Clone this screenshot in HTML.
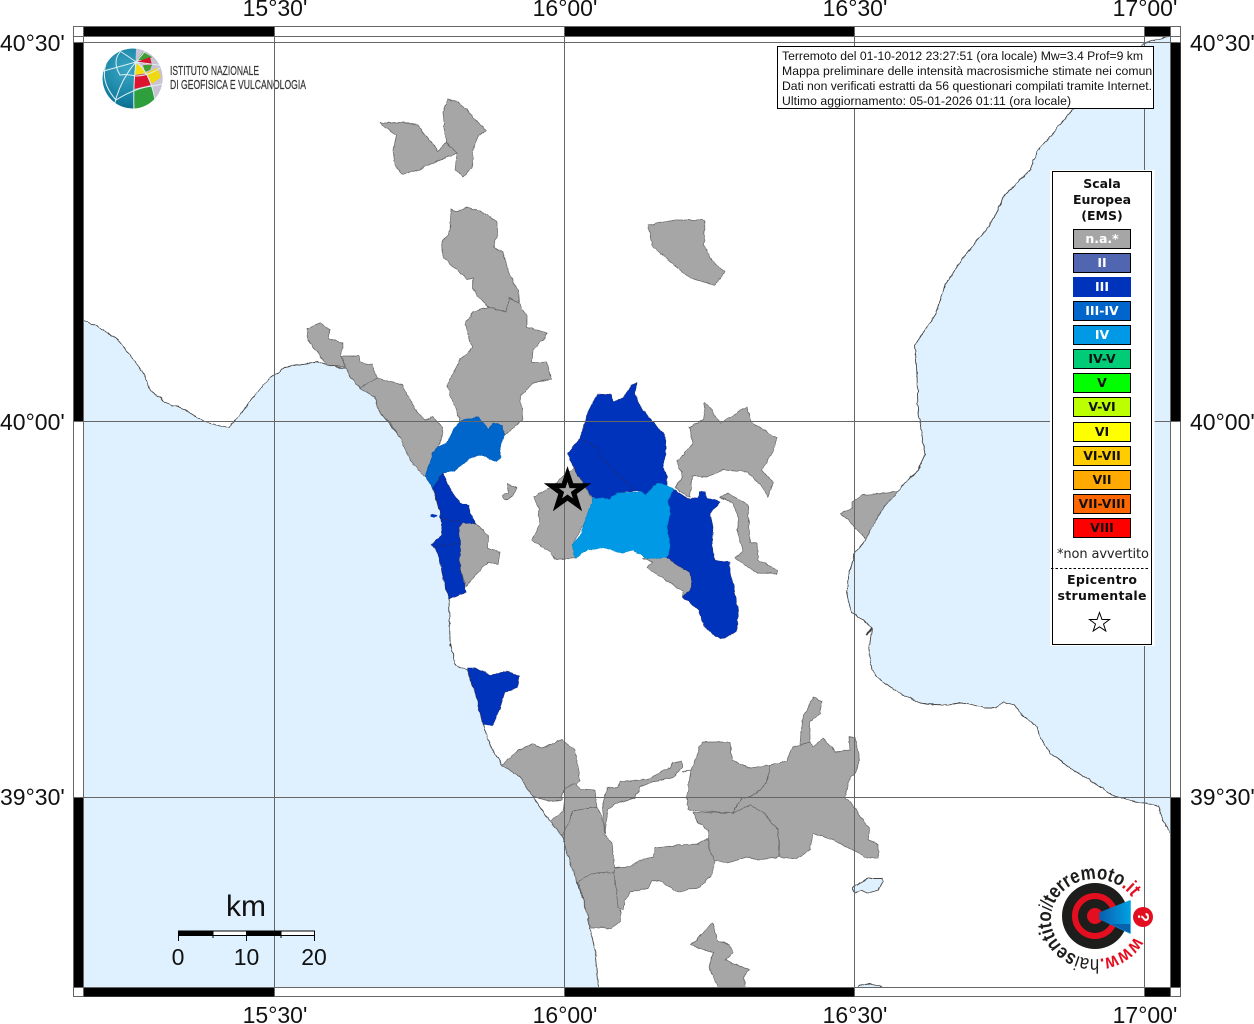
<!DOCTYPE html>
<html lang="it"><head><meta charset="utf-8"><title>Mappa intensità</title>
<style>html,body{margin:0;padding:0;background:#fff;width:1254px;height:1024px;overflow:hidden}svg{display:block}</style></head>
<body>
<svg xmlns="http://www.w3.org/2000/svg" width="1254" height="1024" viewBox="0 0 1254 1024" font-family="'Liberation Sans',sans-serif">
<defs>
<clipPath id="map"><rect x="84" y="37" width="1086" height="950"/></clipPath>
<clipPath id="glob"><circle cx="132.5" cy="78.5" r="30"/></clipPath>
<clipPath id="infoclip"><rect x="778" y="47" width="375" height="61"/></clipPath>
<filter id="rough" filterUnits="userSpaceOnUse" x="70" y="26" width="1115" height="975" color-interpolation-filters="sRGB"><feTurbulence type="fractalNoise" baseFrequency=".16" numOctaves="2" seed="4" result="n"/><feDisplacementMap in="SourceGraphic" in2="n" scale="3" xChannelSelector="R" yChannelSelector="G"/></filter>
<radialGradient id="gb" cx="40%" cy="35%" r="75%"><stop offset="0" stop-color="#3aa6c4"/><stop offset=".7" stop-color="#137d9f"/><stop offset="1" stop-color="#0c5f80"/></radialGradient>
<linearGradient id="cone" x1="0" y1="0" x2="1" y2="0"><stop offset="0" stop-color="#0b5fae"/><stop offset="1" stop-color="#00a0e3"/></linearGradient>
<path id="arc" d="M1134.5 936.5 A44 40 0 1 1 1133 899"/>
</defs>
<rect width="1254" height="1024" fill="#fff"/>
<g clip-path="url(#map)">
<g filter="url(#rough)">
<!-- seas -->
<g fill="#dff1ff" stroke="#444" stroke-width=".9" stroke-linejoin="round">
<polygon points="78,318 84,320 100,328 118,340 130,355 145,375 150,390 165,402 185,410 205,422 228,428 240,415 255,395 270,378 285,367 300,365 318,362 327,365 342,368 348,368 350,377 360,388 375,397 378,410 388,422 410,450 425,477 433,488 440,513 442,535 440,560 443,577 449,599 450,640 455,665 467,670 476,695 483,725 490,745 502,765 520,777 533,797 550,821 562,835 565,847 577,882 586,908 590,928 595,950 598,987 598,995 78,995"/>
<polygon points="1178,34 1155,40 1143,44 1120,70 1072,110 1060,125 1038,150 1030,170 1005,195 990,225 965,255 945,285 935,315 915,345 917,375 918,410 925,455 918,470 908,480 898,491 883,508 870,530 866,539 855,553 848,577 847,597 852,613 863,620 872,628 869,650 872,670 878,678 890,687 907,697 923,704 947,705 965,703 985,708 995,708 1003,702 1015,705 1022,715 1037,727 1040,737 1050,753 1060,760 1067,766 1097,785 1112,795 1120,797 1135,802 1145,803 1158,806 1163,820 1172,835 1178,835"/>
<polygon points="853,887 870,878 882,878 883,882 878,890 868,893 862,890 855,893 853,889"/>
<polygon points="853,992 860,985 870,984 882,987 882,992"/>
</g>
<g fill="#333"><ellipse cx="434" cy="516" rx="3.5" ry="1.5" fill="#0033bb"/><circle cx="450" cy="645" r="1"/></g>
<path d="M866 635 L872 628" stroke="#444" stroke-width="1.5" fill="none"/>
<path d="M682 771 L692 770" stroke="#555" stroke-width=".8" fill="none"/>
<!-- gray comuni -->
<g fill="#a6a6a6" stroke="#666" stroke-width=".7" stroke-linejoin="round">
<polygon points="380,123 405,123 418,125 438,151 446,142 457,153 415,171 402,174 395,165 393,150 396,135"/>
<polygon points="448,99 456,101 467,110 475,120 486,130 477,138 473,152 472,168 463,177 455,170 457,153 446,142 443,112"/>
<polygon points="451,209 457,212 468,207 483,212 497,222 497,237 493,247 503,252 510,275 518,290 519,303 509,298 506,312 488,307 473,290 473,278 467,279 443,257 442,242 450,230"/>
<polygon points="509,298 519,303 527,317 527,327 547,333 545,338 533,350 532,363 547,362 551,379 533,383 520,397 523,420 507,433 500,440 460,430 460,418 453,403 447,385 460,360 472,347 465,325 473,312 488,307 506,312"/>
<polygon points="307,328 320,323 330,330 328,338 343,343 341,356 345,367 327,365 318,353 308,340"/>
<polygon points="341,356 359,356 360,362 372,365 377,378 360,388 350,377 346,367"/>
<polygon points="360,388 377,378 402,385 417,412 425,420 433,417 442,427 443,427 442,440 433,452 428,473 425,477 410,460 400,437 390,423 378,410 375,397"/>
<polygon points="463,522 476,524 488,535 488,548 500,552 498,565 488,562 468,583 466,587 460,567 459,528"/>
<polygon points="508,484 517,488 512,497 505,500 503,496 508,492"/>
<polygon points="575,467 577,473 592,498 593,502 583,525 572,545 576,558 565,559 555,559 550,552 532,540 540,525 538,507 533,497 550,488 563,477"/>
<polygon points="705,403 712,410 720,423 747,407 752,423 777,438 772,453 762,470 773,483 768,497 762,487 747,472 723,470 707,477 692,476 690,498 675,488 683,477 677,462 693,443 689,427 703,420"/>
<polygon points="720,497 728,493 748,505 749,523 750,542 757,543 758,560 777,570 777,574 757,573 735,558 743,550 737,530 739,520 733,503"/>
<polygon points="643,558 667,558 690,573 692,587 683,597 683,592 663,578 647,568 652,562"/>
<polygon points="648,225 675,220 705,220 704,245 713,262 725,272 715,285 690,278 670,262 652,245"/>
<polygon points="898,491 887,493 862,495 852,502 852,508 841,513 866,539 870,530 883,508"/>
<polygon points="502,765 518,750 532,744 542,748 562,740 575,750 580,781 563,790 562,800 550,801 533,797 520,777"/>
<polygon points="563,790 575,783 580,789 595,790 597,807 573,811 567,827 562,835 550,821 563,811 565,798"/>
<polygon points="573,811 597,807 602,817 605,835 612,843 615,872 577,882 565,847 562,835 567,827"/>
<polygon points="578,882 590,874 614,872 620,907 621,920 612,928 590,928 586,908"/>
<polygon points="614,868 630,867 640,860 653,857 655,848 680,845 697,844 708,839 710,852 715,860 713,873 700,887 677,892 662,882 652,880 648,889 630,892 625,900 623,910 618,907"/>
<polygon points="602,808 607,788 618,787 620,782 650,779 660,772 670,768 673,763 682,761 682,768 673,777 663,780 652,782 640,787 635,798 617,803 608,810 605,833"/>
<polygon points="702,742 730,742 732,760 750,768 770,765 767,783 753,796 742,798 732,813 688,810 687,797 691,770"/>
<polygon points="693,812 732,813 750,805 763,812 778,830 779,857 758,860 747,857 727,863 715,860 710,852 708,830 697,822"/>
<polygon points="770,765 787,761 792,747 810,742 813,747 823,738 835,752 850,750 849,737 855,737 858,750 860,760 855,773 850,777 845,797 855,808 870,830 868,840 878,844 878,858 867,858 857,852 833,840 813,833 810,850 797,859 780,857 778,830 763,812 750,805 732,813 742,798 753,796 767,783"/>
<polygon points="800,745 802,720 813,698 822,701 820,713 810,723 810,742"/>
<polygon points="713,922 717,940 730,945 733,953 725,960 750,970 743,977 747,992 720,992 709,967 713,953 691,945"/>
</g>
<!-- III-IV -->
<polygon fill="#0066cc" stroke="#0058b0" stroke-width=".6" points="462,420 478,417 482,422 489,430 493,423 502,425 505,435 500,448 501,457 497,462 483,455 472,457 455,470 443,473 433,488 425,477 433,452 437,447 447,443 455,427"/>
<!-- III -->
<g fill="#0033bb" stroke="#1a2c80" stroke-width=".6" stroke-linejoin="round">
<polygon points="443,473 447,483 453,493 460,503 469,505 470,513 476,524 463,522 459,528 460,543 460,567 466,592 449,599 443,577 440,560 435,547 431,545 442,535 440,513 435,493 433,488"/>
<polygon points="593,402 598,394 612,395 613,402 624,397 632,385 637,383 635,393 640,407 653,422 665,435 666,455 663,467 667,477 667,487 657,483 645,495 642,492 635,491 600,457 598,448 580,438 583,430 588,412"/>
<polygon points="580,438 598,448 600,457 635,491 617,493 610,499 593,498 577,473 570,460 568,453"/>
<polygon points="673,489 690,500 698,497 700,491 705,492 707,498 721,502 710,513 713,527 712,540 713,553 715,560 730,562 730,573 733,583 738,610 737,630 725,638 715,637 705,627 698,610 683,597 692,587 690,573 667,558 670,547 667,527 670,513 668,500"/>
<polygon points="467,668 475,668 490,675 507,672 519,676 517,688 505,692 500,708 493,725 483,725 476,695"/>
</g>
<path d="M441 519 L460 521 M435 547 L460 543" stroke="#1a2c80" stroke-width=".7" fill="none"/>
<!-- IV -->
<polygon fill="#0099e6" stroke="#0088cc" stroke-width=".6" points="593,498 610,499 617,493 642,492 645,495 657,483 673,488 668,500 670,513 667,527 670,547 667,558 648,559 633,550 622,553 605,548 587,550 575,558 572,545 582,533 583,525 592,502"/>
</g>
</g>
<!-- frame -->
<rect x="73.5" y="26.5" width="1107" height="970" fill="none" stroke="#666" stroke-width="1"/>
<g fill="#000">
<rect x="84" y="27" width="190" height="9.5"/><rect x="564.5" y="27" width="290" height="9.5"/><rect x="1144.5" y="27" width="25.5" height="9.5"/>
<rect x="84" y="987.5" width="190" height="9"/><rect x="564.5" y="987.5" width="290" height="9"/><rect x="1144.5" y="987.5" width="25.5" height="9"/>
<rect x="74" y="42" width="9.5" height="379"/><rect x="74" y="797" width="9.5" height="190"/>
<rect x="1170.5" y="42" width="10" height="379"/><rect x="1170.5" y="797" width="10" height="190"/>
</g>
<rect x="83.5" y="36.5" width="1087" height="951" fill="none" stroke="#666" stroke-width="1"/>
<path d="M83.5 26V997M1170.5 26V997M73 36.5H1181M73 987.5H1181" stroke="#666" stroke-width="1" fill="none"/>
<!-- INGV logo -->
<g clip-path="url(#glob)">
<circle cx="132.5" cy="78.5" r="30" fill="url(#gb)"/>
<polygon fill="#c9c3d3" points="136,48 166,48 166,110 134,110"/>
<polygon fill="#3f9f35" points="137,60 143,52 152,57 148,60"/>
<polygon fill="#d8142c" points="137,62 150,57 152,65 140,63"/>
<polygon fill="#f6dd10" points="135,63 143,68 145,73 135,75"/>
<polygon fill="#3f9f35" points="143,65 152,65 150,70 145,72"/>
<polygon fill="#eed80f" points="146,73 157,68 161,77 152,84"/>
<polygon fill="#dc1430" points="135,75 146,74 151,85 134,89"/>
<polygon fill="#2f9e3d" points="134,90 151,86 156,100 142,108 133,109"/>
<g fill="none" stroke="#dff1f4" stroke-width="1">
<path d="M136 62 L100 72"/>
<path d="M136 62 Q120 80 114 106"/>
<path d="M136 62 Q133 85 134 110"/>
<path d="M136 62 Q128 56 118 50"/>
<path d="M136 62 Q142 55 146 50"/>
<path d="M136 62 Q150 72 155 100"/>
<path d="M136 62 L165 66"/>
<path d="M120 52 Q112 62 120 75 Q128 74 136 76 Q148 76 160 68"/>
<path d="M106 64 Q100 82 116 100 Q135 88 152 86 L163 84"/>
</g>
</g>
<g font-size="13" fill="#333" stroke="#333" stroke-width=".2">
<text x="170" y="75" textLength="89" lengthAdjust="spacingAndGlyphs">ISTITUTO NAZIONALE</text>
<text x="170" y="89" textLength="136" lengthAdjust="spacingAndGlyphs">DI GEOFISICA E VULCANOLOGIA</text>
</g>
<!-- grid -->
<g stroke="#666" stroke-width="1" fill="none">
<path d="M274.5 26V997M564.5 26V997M854.5 26V997M1144.5 26V997"/>
<path d="M73 42.5H1181M73 421.5H1181M73 797.5H1181"/>
</g>
<!-- star -->
<polygon fill="#a6a6a6" stroke="#000" stroke-width="5" stroke-linejoin="miter" stroke-miterlimit="10" points="567.5,474 571.4,485.6 583.7,485.7 573.8,493 577.5,504.8 567.5,497.6 557.5,504.8 561.2,493 551.3,485.7 563.6,485.6"/>
<!-- scale -->
<g>
<rect x="178.5" y="931" width="136" height="4.5" fill="#fff" stroke="#000" stroke-width="1"/>
<rect x="178" y="930.5" width="35" height="5.5" fill="#000"/><rect x="246" y="930.5" width="35" height="5.5" fill="#000"/>
<path d="M178.5 931V941M246.5 931V941M314.5 931V941M213 931V938M281 931V938" stroke="#000" stroke-width="1" fill="none"/>
<g font-size="23" text-anchor="middle" fill="#111"><text x="178" y="965">0</text><text x="246.5" y="965">10</text><text x="314" y="965">20</text></g>
<text x="246" y="916" font-size="30" text-anchor="middle" fill="#111">km</text>
</g>
<!-- coordinate labels -->
<g font-size="23" fill="#111" text-anchor="middle">
<text x="275" y="16">15°30'</text><text x="565" y="16">16°00'</text><text x="855" y="16">16°30'</text><text x="1145" y="16">17°00'</text>
<text x="275" y="1023">15°30'</text><text x="565" y="1023">16°00'</text><text x="855" y="1023">16°30'</text><text x="1145" y="1023">17°00'</text>
</g>
<g font-size="23" fill="#111">
<text x="0" y="51">40°30'</text><text x="0" y="430">40°00'</text><text x="0" y="805">39°30'</text>
<text x="1190" y="51">40°30'</text><text x="1190" y="430">40°00'</text><text x="1190" y="805">39°30'</text>
</g>
<!-- info box -->
<rect x="777.5" y="46.5" width="376" height="62" fill="#fff" stroke="#000" stroke-width="1"/>
<g clip-path="url(#infoclip)" font-size="12.2" fill="#111">
<text x="782" y="60" textLength="361">Terremoto del 01-10-2012 23:27:51 (ora locale) Mw=3.4 Prof=9 km</text>
<text x="782" y="75" textLength="373">Mappa preliminare delle intensità macrosismiche stimate nei comuni</text>
<text x="782" y="90" textLength="370">Dati non verificati estratti da 56 questionari compilati tramite Internet.</text>
<text x="782" y="105" textLength="289">Ultimo aggiornamento: 05-01-2026 01:11 (ora locale)</text>
</g>
<!-- legend -->
<rect x="1050" y="170" width="104.5" height="476" fill="#fff"/>
<rect x="1052.5" y="171.5" width="99" height="473" fill="#fff" stroke="#000" stroke-width="1"/>
<g font-family="'DejaVu Sans',sans-serif" font-weight="bold" font-size="12.5" text-anchor="middle" fill="#111">
<text x="1102" y="188">Scala</text><text x="1102" y="204">Europea</text><text x="1102" y="220">(EMS)</text>
<text x="1102" y="584" textLength="70">Epicentro</text><text x="1102" y="600" textLength="89">strumentale</text>
</g>
<g stroke="#000" stroke-width="1">
<rect x="1073.5" y="229.5" width="57" height="19" fill="#a6a6a6"/>
<rect x="1073.5" y="253.5" width="57" height="19" fill="#5066b0"/>
<rect x="1073" y="277" width="58" height="20" fill="#0033bb" stroke="none"/>
<rect x="1073.5" y="301.5" width="57" height="19" fill="#0066cc"/>
<rect x="1073.5" y="325.5" width="57" height="19" fill="#0099e6"/>
<rect x="1073.5" y="349.5" width="57" height="19" fill="#00cc77"/>
<rect x="1073.5" y="373.5" width="57" height="19" fill="#00ff00"/>
<rect x="1073.5" y="397.5" width="57" height="19" fill="#bbff00"/>
<rect x="1073.5" y="422.5" width="57" height="19" fill="#ffff00"/>
<rect x="1073.5" y="446.5" width="57" height="19" fill="#ffcc00"/>
<rect x="1073.5" y="470.5" width="57" height="19" fill="#ffaa00"/>
<rect x="1073.5" y="494.5" width="57" height="19" fill="#ff6600"/>
<rect x="1073.5" y="518.5" width="57" height="19" fill="#ff0000"/>
</g>
<g font-family="'DejaVu Sans',sans-serif" font-weight="bold" font-size="12.5" text-anchor="middle">
<g fill="#fff">
<text x="1102" y="243">n.a.*</text><text x="1102" y="267">II</text><text x="1102" y="291">III</text><text x="1102" y="315">III-IV</text><text x="1102" y="339">IV</text>
</g>
<g fill="#111">
<text x="1102" y="363">IV-V</text>
<text x="1102" y="387">V</text><text x="1102" y="411">V-VI</text><text x="1102" y="436">VI</text><text x="1102" y="460">VI-VII</text><text x="1102" y="484">VII</text><text x="1102" y="508">VII-VIII</text><text x="1102" y="532">VIII</text>
</g>
</g>
<text x="1057" y="558" font-family="'DejaVu Sans',sans-serif" font-size="13" fill="#222" textLength="92">*non avvertito</text>
<path d="M1051 568.5H1150" stroke="#000" stroke-width="1" stroke-dasharray="2.5 2" fill="none"/>
<polygon fill="#fff" stroke="#000" stroke-width="1" points="1099.5,612.5 1102,619.5 1109.5,619.5 1103.5,624 1105.8,631 1099.5,626.8 1093.2,631 1095.5,624 1089.5,619.5 1097,619.5"/>
<!-- hai sentito logo -->
<circle cx="1095" cy="916" r="33" fill="#1d1d1b"/>
<circle cx="1095" cy="916" r="20" fill="none" stroke="#e30f20" stroke-width="6"/>
<circle cx="1095" cy="916" r="8" fill="#e30f20"/>
<polygon fill="url(#cone)" stroke="url(#cone)" stroke-width="1.5" stroke-linejoin="round" points="1100,913 1130,901 1130,933 1100,919"/>
<polygon fill="#0a62ad" points="1111,924 1130,924 1130,933"/>
<circle cx="1143" cy="917" r="10" fill="#e30f20"/>
<text x="0" y="0" font-size="16" font-weight="bold" fill="#fff" text-anchor="middle" transform="translate(1138 917) rotate(90)">?</text>
<text font-size="20" fill="#1d1d1b" font-weight="bold"><textPath href="#arc" textLength="222" lengthAdjust="spacingAndGlyphs"><tspan fill="#e30f20">www.</tspan><tspan font-weight="normal">hai</tspan><tspan>sentito</tspan><tspan font-weight="normal" font-style="italic">il</tspan><tspan>terremoto</tspan><tspan fill="#e30f20">.it</tspan></textPath></text>
</svg>
</body></html>
